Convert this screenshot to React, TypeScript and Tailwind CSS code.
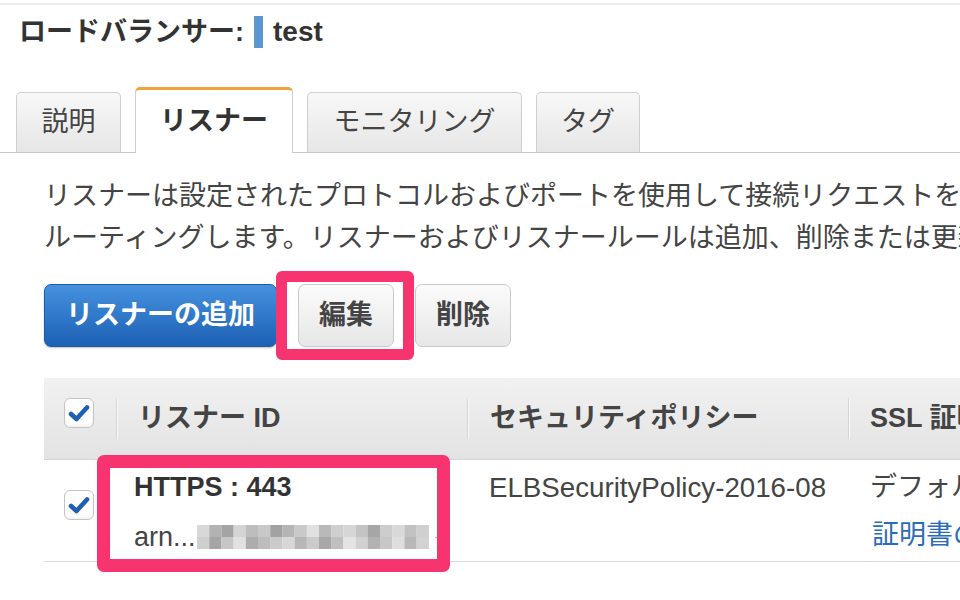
import React from "react";

const font = "font-['Liberation_Sans','Noto_Sans_CJK_JP',sans-serif]";

function CheckBox({ className = "" }: { className?: string }) {
  return (
    <div
      className={`w-[30px] h-[30px] rounded-[6px] border border-[#c4c4c4] bg-white shadow-[inset_0_-2px_3px_rgba(0,0,0,0.06)] flex items-center justify-center ${className}`}
    >
      <svg width="22" height="20" viewBox="0 0 22 20">
        <path
          d="M3 11 L8.5 16 L19 4.5"
          fill="none"
          stroke="#1f5fb3"
          strokeWidth="4.6"
          strokeLinecap="round"
          strokeLinejoin="round"
        />
      </svg>
    </div>
  );
}

// pixelated (blurred-out) part of the ARN
const blurCells = [
  ["#d8d8d8", "#b3b3b3", "#a4a4a4", "#d4d4d4", "#bdbdbd", "#c8c8c8", "#a2a2a2", "#b5b5b5", "#c9c9c9", "#e0e0e0", "#b9b9b9", "#cfcfcf", "#d6d6d6", "#c3c3c3", "#a6a6a6", "#cdcdcd", "#d9d9d9", "#c2c2c2", "#cfcfcf"],
  ["#cfcfcf", "#a5a5a5", "#c6c6c6", "#e1e1e1", "#adadad", "#bdbdbd", "#cacaca", "#d7d7d7", "#b7b7b7", "#cbcbcb", "#a8a8a8", "#bfbfbf", "#e4e4e4", "#d1d1d1", "#b2b2b2", "#c7c7c7", "#dedede", "#b8b8b8", "#d2d2d2"],
];

function Blur() {
  return (
    <svg width="232" height="24" viewBox="0 0 232 24" className="ml-[1px]">
      {blurCells.map((row, r) =>
        row.map((c, i) => (
          <rect key={`${r}-${i}`} x={i * 12.2} y={r * 12} width="12.3" height="12" fill={c} />
        )),
      )}
    </svg>
  );
}

const tabs = [
  { label: "説明", w: "w-[105px]" },
  { label: "リスナー", w: "w-[158px]", active: true },
  { label: "モニタリング", w: "w-[215px]" },
  { label: "タグ", w: "w-[104px]" },
];

export default function App() {
  return (
    <div className={`relative w-[960px] h-[600px] overflow-hidden bg-white ${font}`}>
      <div className="h-[2px] bg-[#ececec] mt-[3px]" />

      {/* Title */}
      <div className="flex items-center h-[34px] mt-[10px] pl-[19px] text-[27px] font-bold text-[#333] whitespace-nowrap">
        <span>ロードバランサー:</span>
        <span className="inline-block w-[9px] h-[32px] bg-[#5a97d3] ml-[10px] mr-[10px]" />
        <span className="text-[28px]">test</span>
      </div>

      {/* Tabs */}
      <div className="flex items-end gap-[14px] pl-[16px] mt-[38px] h-[66px] border-b border-[#c8c8c8] text-[27px]">
        {tabs.map((t) =>
          t.active ? (
            <div
              key={t.label}
              className={`${t.w} h-[66px] -mb-px flex items-center justify-center bg-white border-x border-t-[3px] border-[#cfcfcf] border-t-[#f0a33a] rounded-t-[5px] font-bold text-[#333]`}
            >
              {t.label}
            </div>
          ) : (
            <div
              key={t.label}
              className={`${t.w} h-[60px] flex items-center justify-center bg-gradient-to-b from-[#f8f8f8] to-[#e6e6e6] border-x border-t border-[#cfcfcf] rounded-t-[5px] text-[#444]`}
            >
              {t.label}
            </div>
          ),
        )}
      </div>

      {/* Description */}
      <div className="mt-[22px] pl-[44px] text-[27px] leading-[42px] text-[#444] whitespace-nowrap">
        <div>リスナーは設定されたプロトコルおよびポートを使用して接続リクエストをチェックするプロセスです。</div>
        <div>ルーティングします。リスナーおよびリスナールールは追加、削除または更新できます。</div>
      </div>

      {/* Buttons */}
      <div className="flex mt-[25px] pl-[44px] gap-[21px] text-[27px] font-bold">
        <button className="h-[63px] w-[233px] rounded-[7px] border border-[#1d5aa3] bg-gradient-to-b from-[#4592df] to-[#1d60b4] text-white shadow-[0_1px_2px_rgba(0,0,0,0.25)]">
          リスナーの追加
        </button>
        <button className="h-[63px] w-[96px] rounded-[7px] border border-[#cacaca] bg-gradient-to-b from-[#fbfbfb] to-[#e7e7e7] text-[#444]">
          編集
        </button>
        <button className="h-[63px] w-[96px] rounded-[7px] border border-[#cacaca] bg-gradient-to-b from-[#fbfbfb] to-[#e7e7e7] text-[#444]">
          削除
        </button>
      </div>

      {/* Table */}
      <div className="mt-[31px] ml-[44px] text-[27px]">
        <div className="flex h-[82px] bg-gradient-to-b from-[#f1f1f1] to-[#e3e3e3] border-b border-[#d6d6d6] font-bold text-[#444] whitespace-nowrap">
          <div className="w-[72px] pl-[20px] pt-[20px] shrink-0">
            <CheckBox />
          </div>
          <div className="w-[351px] shrink-0 flex items-center">
            <span className="w-[2px] h-[40px] bg-[#fafafa] border-l border-[#d4d4d4]" />
            <span className="pl-[20px]">リスナー ID</span>
          </div>
          <div className="w-[381px] shrink-0 flex items-center">
            <span className="w-[2px] h-[40px] bg-[#fafafa] border-l border-[#d4d4d4]" />
            <span className="pl-[21px]">セキュリティポリシー</span>
          </div>
          <div className="flex-1 flex items-center">
            <span className="w-[2px] h-[40px] bg-[#fafafa] border-l border-[#d4d4d4]" />
            <span className="pl-[20px]">SSL 証明書</span>
          </div>
        </div>

        <div className="flex h-[102px] border-b border-[#dadada] text-[#444] whitespace-nowrap leading-[34px]">
          <div className="w-[72px] pl-[20px] pt-[30px] shrink-0">
            <CheckBox />
          </div>
          <div className="w-[351px] shrink-0 pl-[18px] pt-[10px]">
            <div className="font-bold text-[#333]">HTTPS : 443</div>
            <div className="flex items-center mt-[16px]">
              <span>arn...</span>
              <Blur />
              <span className="ml-[6px] text-[#bbb] text-[16px]">-</span>
            </div>
          </div>
          <div className="w-[381px] shrink-0 pl-[22px] pt-[11px] text-[27.7px]">ELBSecurityPolicy-2016-08</div>
          <div className="flex-1 pl-[22px] pt-[10px]">
            <div>デフォルト</div>
            <div className="mt-[14px] text-[#2a6cb8] pl-[2px]">証明書の表示</div>
          </div>
        </div>
      </div>

      {/* highlight boxes */}
      <div className="absolute left-[276px] top-[271px] w-[138px] h-[89px] border-[11px] border-[#f7346f] rounded-[6px]" />
      <div className="absolute left-[97px] top-[455px] w-[353px] h-[117px] border-[13px] border-[#f7346f] rounded-[7px]" />
    </div>
  );
}
